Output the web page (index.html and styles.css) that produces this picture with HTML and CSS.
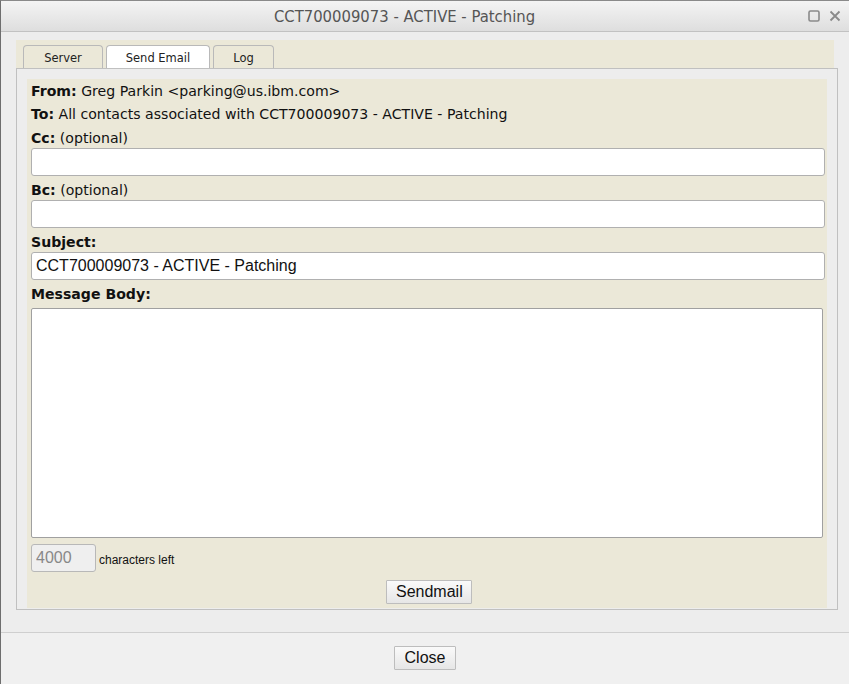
FILE: index.html
```
<!DOCTYPE html>
<html>
<head>
<meta charset="utf-8">
<link rel="stylesheet" href="styles.css">
</head>
<body>
<div class="window">
  <div class="titlebar">
    <div class="title">CCT700009073 - ACTIVE - Patching</div>
    <div class="wbtns">
      <svg width="12" height="12" viewBox="0 0 12 12"><rect x="1" y="1" width="10" height="10" rx="1.5" fill="none" stroke="#8a8a8a" stroke-width="1.6"/></svg>
      <svg width="12" height="12" viewBox="0 0 12 12"><path d="M1.5 1.5 L10.5 10.5 M10.5 1.5 L1.5 10.5" stroke="#8a8a8a" stroke-width="1.8"/></svg>
    </div>
  </div>
  <div class="main">
    <div class="tabbar">
      <div class="tab">Server</div>
      <div class="tab active">Send Email</div>
      <div class="tab">Log</div>
    </div>
    <div class="panel">
      <div class="content">
        <div class="row"><b>From:</b> Greg Parkin &lt;parking@us.ibm.com&gt;</div>
        <div class="row"><b>To:</b> All contacts associated with CCT700009073 - ACTIVE - Patching</div>
        <div class="label first"><b>Cc:</b> (optional)</div>
        <input class="field" type="text">
        <div class="label"><b>Bc:</b> (optional)</div>
        <input class="field" type="text">
        <div class="label"><b>Subject:</b></div>
        <input class="field" type="text" value="CCT700009073 - ACTIVE - Patching">
        <div class="label"><b>Message Body:</b></div>
        <textarea class="body"></textarea>
        <div class="counter">
          <input class="count" type="text" value="4000" readonly>
          <span class="left">characters left</span>
        </div>
        <div class="actions"><button class="btn send">Sendmail</button></div>
      </div>
    </div>
  </div>
  <div class="footer"><button class="btn close">Close</button></div>
</div>
</body>
</html>
```
FILE: styles.css
```
html, body {
  margin: 0;
  padding: 0;
}
body {
  width: 849px;
  height: 684px;
  overflow: hidden;
  background: #ededed;
  font-family: "DejaVu Sans", sans-serif;
}
.window {
  height: 684px;
  box-sizing: border-box;
  border-left: 1px solid #6e6e6e;
  border-top: 1px solid #8a8a8a;
  display: flex;
  flex-direction: column;
  background: #ededed;
}
.titlebar {
  height: 30px;
  flex: none;
  display: flex;
  align-items: center;
  background: linear-gradient(#f4f4f4, #dedede);
  border-bottom: 1px solid #c2c2c2;
}
.title {
  width: 807px;
  text-align: center;
  font-family: "DejaVu Sans Condensed", "DejaVu Sans", sans-serif;
  font-size: 16.5px;
  color: #555;
  font-stretch: condensed;
}
.wbtns {
  display: flex;
  gap: 9px;
  align-items: center;
}
.main {
  flex: 1;
  padding: 8px 11px 0 15px;
}
.tabbar {
  height: 28px;
  margin-right: 4px;
  background: #ebe8d8;
  display: flex;
  align-items: flex-end;
  gap: 3px;
  padding-left: 7px;
}
.tab {
  height: 23px;
  box-sizing: border-box;
  border: 1px solid #b9b9b9;
  border-bottom: none;
  border-radius: 4px 4px 0 0;
  background: #ebe8d8;
  font-size: 11.5px;
  color: #222;
  line-height: 24px;
  padding: 0 10px;
  text-align: center;
}
.tab:first-child { width: 80px; }
.tab.active { width: 104px; background: #fff; }
.tab:last-child { width: 61px; }
.panel {
  border: 1px solid #c0c0c0;
  padding: 10px 10px 1px 10px;
}
.content {
  background: #ebe8d8;
  padding: 1px 2px 4px 4px;
  font-size: 14.1px;
  color: #111;
}
.row {
  height: 23px;
  line-height: 23px;
}
.label {
  height: 20px;
  line-height: 20px;
  margin-top: 4px;
}
.label.first { margin-top: 2px; }
.field {
  display: block;
  box-sizing: border-box;
  width: 100%;
  height: 28px;
  margin: 0;
  border: 1px solid #b0b0b0;
  border-radius: 3px;
  background: #fff;
  font-family: "Liberation Sans", Arial, sans-serif;
  font-size: 16px;
  color: #111;
  padding: 0 4px;
  outline: none;
}
.body {
  display: block;
  box-sizing: border-box;
  width: calc(100% - 2px);
  height: 230px;
  margin: 4px 0 0 0;
  border: 1px solid #a0a0a0;
  border-radius: 2px;
  background: #fff;
  resize: none;
  outline: none;
}
.counter {
  display: flex;
  align-items: center;
  margin-top: 6px;
  gap: 3px;
}
.count {
  box-sizing: border-box;
  width: 65px;
  height: 28px;
  margin: 0;
  border: 1px solid #b8b8b8;
  border-radius: 3px;
  background: #efefef;
  color: #888;
  font-family: "Liberation Sans", Arial, sans-serif;
  font-size: 16px;
  padding: 0 4px;
  outline: none;
}
.left {
  font-family: "Liberation Sans", Arial, sans-serif;
  font-size: 12px;
  color: #111;
  margin-top: 4px;
}
.actions {
  margin-top: 8px;
  display: flex;
  justify-content: center;
  padding-left: 2px;
}
.btn {
  box-sizing: border-box;
  height: 24px;
  margin: 0;
  padding: 0 9px;
  border: 1px solid #bdbdbd;
  border-radius: 1px;
  background: linear-gradient(#fafafa, #e6e6e6);
  font-family: "Liberation Sans", Arial, sans-serif;
  font-size: 16px;
  color: #111;
}
.send { width: 86px; }
.close { width: 62px; height: 24px; }
.footer {
  flex: none;
  border-top: 1px solid #cfcfcf;
  background: #f0f0f0;
  display: flex;
  justify-content: center;
  align-items: flex-start;
  padding-top: 13px;
  box-sizing: border-box;
  height: 52px;
}
```
